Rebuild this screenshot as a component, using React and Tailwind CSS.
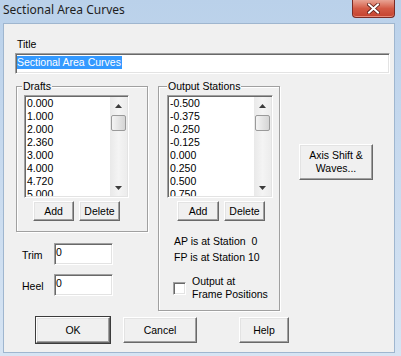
import React from 'react';

const sunken =
  'border border-t-[#a0a0a0] border-l-[#a0a0a0] border-b-white border-r-white shadow-[inset_1px_1px_0_#696969,inset_-1px_-1px_0_#e3e3e3]';
const raised =
  'border border-t-white border-l-white border-b-[#696969] border-r-[#696969] shadow-[inset_-1px_-1px_0_#a0a0a0,inset_1px_1px_0_#e3e3e3] bg-[#f0f0f0]';
const etched = 'border border-[#a0a0a0] shadow-[inset_1px_1px_0_#ffffff,1px_1px_0_#ffffff]';

const drafts = ['0.000', '1.000', '2.000', '2.360', '3.000', '4.000', '4.720', '5.000'];
const stations = ['-0.500', '-0.375', '-0.250', '-0.125', '0.000', '0.250', '0.500', '0.750'];

function Arrow({ down }) {
  return (
    <svg width="7" height="4" viewBox="0 0 7 4">
      <path d={down ? 'M0 0 L7 0 L3.5 4 Z' : 'M0 4 L3.5 0 L7 4 Z'} fill="#3c3c3c" />
    </svg>
  );
}

function ScrollBar() {
  return (
    <div className="w-[17px] h-full flex flex-col bg-gradient-to-r from-[#e9e9e9] via-[#f4f4f4] to-[#ececec]">
      <div className="h-[17px] flex items-center justify-center">
        <Arrow />
      </div>
      <div className="mx-[1px] mt-[1px] h-[16px] rounded-[2px] border border-[#9a9a9a] bg-gradient-to-r from-[#f4f4f4] to-[#d5d5d5]" />
      <div className="flex-1" />
      <div className="h-[17px] flex items-center justify-center">
        <Arrow down />
      </div>
    </div>
  );
}

function ListBox({ items, width }) {
  return (
    <div className={`${sunken} bg-white h-[103px] flex p-[1px]`} style={{ width }}>
      <div className="flex-1 overflow-hidden pl-[1px]">
        {items.map((item) => (
          <div key={item} className="leading-[13px] h-[13px] whitespace-nowrap">
            {item}
          </div>
        ))}
      </div>
      <ScrollBar />
    </div>
  );
}

function Button({ children, className = '' }) {
  return (
    <div className={`${raised} flex items-center justify-center leading-[13px] text-center ${className}`}>
      {children}
    </div>
  );
}

export default function App() {
  return (
    <div className="w-[401px] h-[356px] overflow-hidden bg-gradient-to-b from-[#bad1ea] via-[#c9dbef] to-[#d6e4f3] text-black text-[10.5px] font-['Liberation_Sans',Arial,sans-serif] flex flex-col">
      {/* Title bar */}
      <div className="h-[23px] flex items-start justify-between">
        <span className="ml-[3px] mt-[2px] text-[12px] leading-[16px] text-[#1e1e1e] font-['Noto_Sans','Open_Sans',sans-serif]">
          Sectional Area Curves
        </span>
        <div className="mr-[6px] w-[43px] h-[18px] rounded-b-[4px] border border-t-0 border-[#7a2b25] bg-gradient-to-b from-[#e8a394] via-[#d35a45] to-[#c4422e] flex items-center justify-center shadow-[inset_0_-1px_0_#e88a78]">
          <svg width="13" height="11" viewBox="0 0 13 11">
            <path d="M2 1.5 L11 9.5 M11 1.5 L2 9.5" stroke="#5a1a14" strokeWidth="3.6" strokeLinecap="square" />
            <path d="M2 1.5 L11 9.5 M11 1.5 L2 9.5" stroke="#ffffff" strokeWidth="2" strokeLinecap="square" />
          </svg>
        </div>
      </div>

      {/* Client area */}
      <div className="ml-[3px] w-[392px] h-[330px] bg-[#f0f0f0] border border-[#9fb6cf] flex flex-col">
        <div className="ml-[13px] mt-[14px] leading-[13px]">Title</div>
        <div className={`${sunken} bg-white ml-[11px] mt-[2px] w-[375px] h-[21px] px-[1px] pt-[1px]`}>
          <span className="inline-block bg-[#3399ff] text-white leading-[13px] h-[13px] pr-[1px]">Sectional Area Curves</span>
        </div>

        <div className="flex items-start mt-[12px]">
          {/* Left column */}
          <div className="ml-[12px] flex flex-col">
            <div className={`${etched} relative w-[132px] h-[146px] flex flex-col`}>
              <span className="absolute left-[5px] top-[-7px] px-[1px] bg-[#f0f0f0] leading-[13px]">Drafts</span>
              <div className="ml-[7px] mt-[8px]">
                <ListBox items={drafts} width={105} />
              </div>
              <div className="flex ml-[16px] mt-[3px]">
                <Button className="w-[41px] h-[20px]">Add</Button>
                <Button className="w-[41px] h-[20px] ml-[5px]">Delete</Button>
              </div>
            </div>
            <div className="flex items-center mt-[11px] ml-[6px]">
              <span className="w-[32px] pt-[2px] leading-[13px]">Trim</span>
              <div className={`${sunken} bg-white w-[59px] h-[22px] pl-[1px] pt-[2px] leading-[13px]`}>0</div>
            </div>
            <div className="flex items-center mt-[9px] ml-[6px]">
              <span className="w-[32px] pt-[2px] leading-[13px]">Heel</span>
              <div className={`${sunken} bg-white w-[59px] h-[22px] pl-[1px] pt-[2px] leading-[13px]`}>0</div>
            </div>
          </div>

          {/* Output stations */}
          <div className={`${etched} relative ml-[10px] w-[122px] h-[225px] flex flex-col`}>
            <span className="absolute left-[8px] top-[-7px] px-[1px] bg-[#f0f0f0] leading-[13px]">Output Stations</span>
            <div className="ml-[8px] mt-[8px]">
              <ListBox items={stations} width={106} />
            </div>
            <div className="flex ml-[18px] mt-[3px]">
              <Button className="w-[42px] h-[20px]">Add</Button>
              <Button className="w-[41px] h-[20px] ml-[5px]">Delete</Button>
            </div>
            <div className="ml-[15px] mt-[12px] leading-[16px] whitespace-pre">
              <div>AP is at Station  0</div>
              <div>FP is at Station 10</div>
            </div>
            <div className="flex items-center ml-[14px] mt-[10px]">
              <div className={`${sunken} bg-white w-[13px] h-[13px]`} />
              <div className="ml-[6px] leading-[13px]">
                <div>Output at</div>
                <div>Frame Positions</div>
              </div>
            </div>
          </div>

          {/* Right column */}
          <Button className="ml-[19px] mt-[58px] w-[74px] h-[36px]">
            Axis Shift &amp;
            <br />
            Waves...
          </Button>
        </div>

        {/* Bottom buttons */}
        <div className="flex mt-[6px]">
          <Button className="ml-[32px] w-[74px] h-[26px] outline outline-1 outline-[#3c3c3c]">OK</Button>
          <Button className="ml-[13px] w-[74px] h-[26px]">Cancel</Button>
          <Button className="ml-[42px] w-[50px] h-[26px]">Help</Button>
        </div>
      </div>
    </div>
  );
}
